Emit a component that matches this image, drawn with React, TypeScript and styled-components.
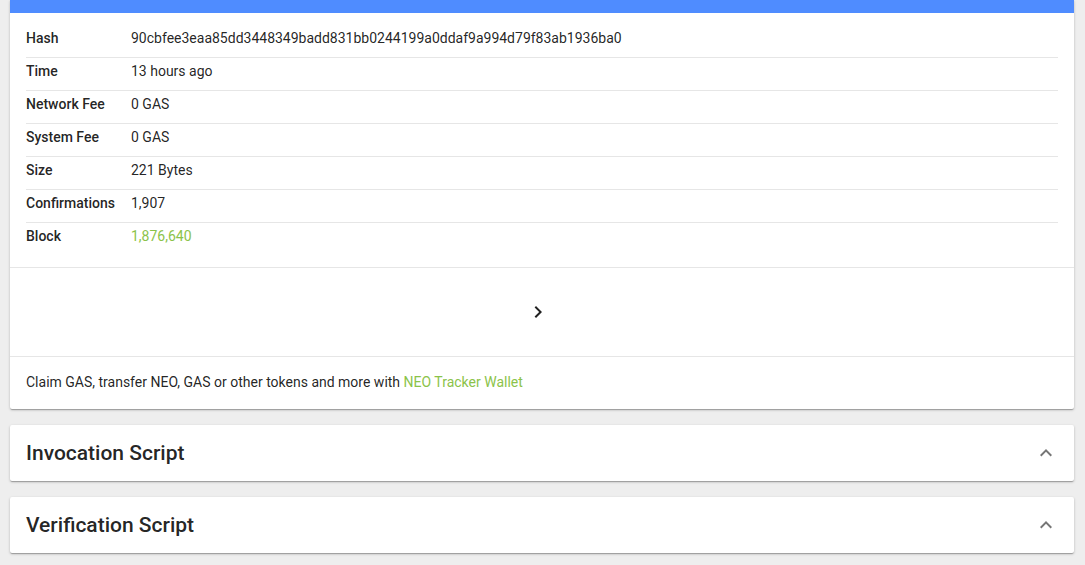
import styled, { createGlobalStyle } from "styled-components";

const GlobalStyle = createGlobalStyle`
  html, body {
    margin: 0;
    padding: 0;
    background: #eeeeee;
    font-family: Roboto, "Liberation Sans", sans-serif;
    color: rgba(0, 0, 0, 0.87);
  }
`;

const rows: { label: string; value: string; link?: boolean }[] = [
  { label: "Hash", value: "90cbfee3eaa85dd3448349badd831bb0244199a0ddaf9a994d79f83ab1936ba0" },
  { label: "Time", value: "13 hours ago" },
  { label: "Network Fee", value: "0 GAS" },
  { label: "System Fee", value: "0 GAS" },
  { label: "Size", value: "221 Bytes" },
  { label: "Confirmations", value: "1,907" },
  { label: "Block", value: "1,876,640", link: true },
];

function App() {
  return (
    <>
      <GlobalStyle />
      <Page>
        <Card>
          <TopBar />
          <Table>
            {rows.map((row, i) => (
              <Row key={row.label} last={i === rows.length - 1}>
                <Label>{row.label}</Label>
                <Value link={row.link}>{row.value}</Value>
              </Row>
            ))}
          </Table>
          <Divider />
          <Pager>
            <svg width="24" height="24" viewBox="0 0 24 24">
              <path d="M10 6L8.59 7.41 13.17 12l-4.58 4.59L10 18l6-6z" fill="rgba(0,0,0,0.87)" />
            </svg>
          </Pager>
          <Divider />
          <Footer>
            Claim GAS, transfer NEO, GAS or other tokens and more with{" "}
            <Link>NEO Tracker Wallet</Link>
          </Footer>
        </Card>
        <Panel title="Invocation Script" />
        <Panel title="Verification Script" />
      </Page>
    </>
  );
}

function Panel({ title }: { title: string }) {
  return (
    <PanelCard>
      <PanelTitle>{title}</PanelTitle>
      <svg width="24" height="24" viewBox="0 0 24 24">
        <path d="M7.41 15.41L12 10.83l4.59 4.58L18 14l-6-6-6 6z" fill="rgba(0,0,0,0.54)" />
      </svg>
    </PanelCard>
  );
}

export default App;

const Page = styled.div`
  display: flex;
  flex-direction: column;
  row-gap: 16px;
  padding: 0 11px 12px 10px;
`;

const Card = styled.div`
  background: #fff;
  border-radius: 0 0 2px 2px;
  box-shadow: 0 1px 3px rgba(0, 0, 0, 0.2), 0 1px 1px rgba(0, 0, 0, 0.14),
    0 2px 1px -1px rgba(0, 0, 0, 0.12);
`;

const TopBar = styled.div`
  height: 13px;
  background: #4f8cff;
`;

const Table = styled.div`
  display: flex;
  flex-direction: column;
  padding: 12px 16px 12px 16px;
`;

const Row = styled.div<{ last?: boolean }>`
  display: flex;
  align-items: flex-start;
  height: ${(p) => (p.last ? "32px" : "33px")};
  box-sizing: border-box;
  padding: 3px 0 9px;
  border-bottom: ${(p) => (p.last ? "none" : "1px solid #e6e6e6")};
  font-size: 14px;
  line-height: 20px;
`;

const Label = styled.div`
  width: 105px;
  flex-shrink: 0;
  font-weight: 500;
  color: rgba(0, 0, 0, 0.87);
`;

const Value = styled.div<{ link?: boolean }>`
  color: ${(p) => (p.link ? "#8bc34a" : "rgba(0, 0, 0, 0.87)")};
`;

const Divider = styled.div`
  height: 1px;
  background: #e6e6e6;
`;

const Pager = styled.div`
  display: flex;
  align-items: center;
  justify-content: center;
  height: 88px;
  padding-right: 8px;
`;

const Footer = styled.div`
  padding: 15px 16px 17px;
  font-size: 14px;
  line-height: 20px;
  color: rgba(0, 0, 0, 0.87);
`;

const Link = styled.span`
  color: #8bc34a;
`;

const PanelCard = styled.div`
  display: flex;
  align-items: center;
  justify-content: space-between;
  height: 56px;
  padding: 0 16px;
  background: #fff;
  border-radius: 2px;
  box-shadow: 0 1px 3px rgba(0, 0, 0, 0.2), 0 1px 1px rgba(0, 0, 0, 0.14),
    0 2px 1px -1px rgba(0, 0, 0, 0.12);
`;

const PanelTitle = styled.div`
  font-size: 21px;
  font-weight: 500;
  line-height: 28px;
  color: rgba(0, 0, 0, 0.87);
`;
